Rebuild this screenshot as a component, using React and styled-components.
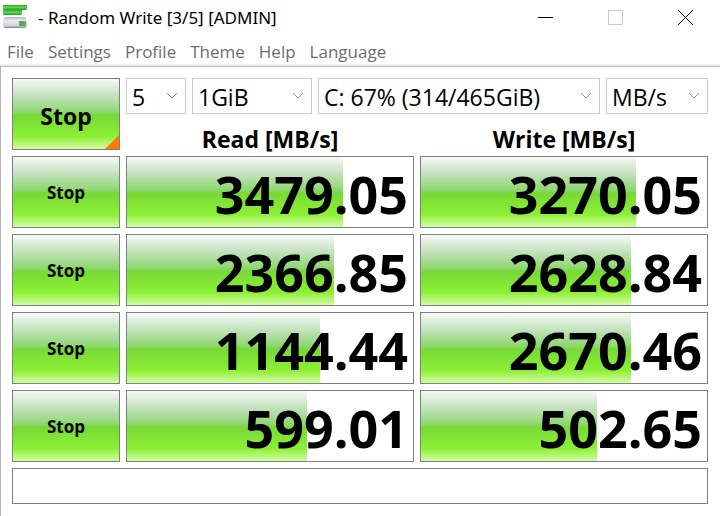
import React from "react";
import styled, { createGlobalStyle } from "styled-components";

const menus = ["File", "Settings", "Profile", "Theme", "Help", "Language"];

const results = [
  { read: "3479.05", readBar: 75.5, write: "3270.05", writeBar: 75 },
  { read: "2366.85", readBar: 72.5, write: "2628.84", writeBar: 73.5 },
  { read: "1144.44", readBar: 67.5, write: "2670.46", writeBar: 73.5 },
  { read: "599.01", readBar: 63, write: "502.65", writeBar: 61.5 },
];

function DiskIcon() {
  return (
    <svg width="26" height="26" viewBox="0 0 26 26" aria-hidden="true">
      <defs>
        <linearGradient id="diskTop" x1="0" y1="0" x2="0" y2="1">
          <stop offset="0" stopColor="#36a833" />
          <stop offset="0.5" stopColor="#5ed653" />
          <stop offset="1" stopColor="#1f9a1f" />
        </linearGradient>
        <linearGradient id="diskBody" x1="0" y1="0" x2="0" y2="1">
          <stop offset="0" stopColor="#b4b4b8" />
          <stop offset="0.3" stopColor="#e9e9f1" />
          <stop offset="0.8" stopColor="#d4d4de" />
          <stop offset="1" stopColor="#77777c" />
        </linearGradient>
      </defs>
      <path d="M1 0h24v4l-1 1H2L1 4z" fill="url(#diskTop)" />
      <path d="M1 5h19v4l-1 1H2L1 9z" fill="url(#diskTop)" />
      <path d="M3 12h20l2 3v6l-2 2H3l-2-2v-6z" fill="url(#diskBody)" />
      <rect x="17" y="16" width="7" height="5" fill="#8b958c" />
      <rect x="18" y="16" width="4" height="5" fill="#4fae48" />
    </svg>
  );
}

function Dropdown({ label, value }) {
  return (
    <SelectBox>
      <Select aria-label={label} defaultValue={value}>
        <option value={value}>{value}</option>
      </Select>
      <Chevron viewBox="0 0 12 7" aria-hidden="true">
        <path d="M1 1l5 5 5-5" fill="none" stroke="#999" />
      </Chevron>
    </SelectBox>
  );
}

function Result({ value, bar }) {
  return (
    <Meter>
      <Fill style={{ width: `${bar}%` }} />
      <Value>{value}</Value>
    </Meter>
  );
}

function App() {
  return (
    <>
      <GlobalStyle />
      <TitleBar>
        <DiskIcon />
        <Title>- Random Write [3/5] [ADMIN]</Title>
        <WindowButton aria-label="Minimize">
          <svg width="15" height="16">
            <path d="M0 7.5h15" stroke="#000" />
          </svg>
        </WindowButton>
        <WindowButton aria-label="Maximize" disabled>
          <svg width="15" height="16">
            <rect x="0.5" y="0.5" width="14" height="14" fill="none" stroke="#ccc" />
          </svg>
        </WindowButton>
        <WindowButton aria-label="Close">
          <svg width="15" height="16">
            <path d="M0 0l15 15M15 0L0 15" stroke="#000" />
          </svg>
        </WindowButton>
      </TitleBar>
      <MenuBar>
        {menus.map((name) => (
          <MenuItem key={name}>{name}</MenuItem>
        ))}
      </MenuBar>
      <Main>
        <Row>
          <StopButton $all>Stop</StopButton>
          <Setup>
            <Selects>
              <Dropdown label="Test count" value="5" />
              <Dropdown label="Test size" value="1GiB" />
              <Dropdown label="Drive" value="C: 67% (314/465GiB)" />
              <Dropdown label="Unit" value="MB/s" />
            </Selects>
            <Headings>
              <Heading>Read [MB/s]</Heading>
              <Heading>Write [MB/s]</Heading>
            </Headings>
          </Setup>
        </Row>
        {results.map((r) => (
          <Row key={r.read}>
            <StopButton>Stop</StopButton>
            <Result value={r.read} bar={r.readBar} />
            <Result value={r.write} bar={r.writeBar} />
          </Row>
        ))}
        <Comment aria-label="Comment" />
      </Main>
    </>
  );
}

const green = `linear-gradient(
  #f8f8f8 0%,
  #c3e2bd 24%,
  #8ed770 47%,
  #78d936 52%,
  #8cf035 82%,
  #d3fba6 100%
)`;

const GlobalStyle = createGlobalStyle`
  * {
    box-sizing: border-box;
  }
  body {
    margin: 0;
    background: #fff;
    color: #000;
  }
  body, button, select, input {
    font-family: "Open Sans", "Noto Sans", sans-serif;
  }
  svg {
    display: block;
  }
`;

const TitleBar = styled.header`
  display: flex;
  align-items: center;
  height: 36px;
  padding-left: 2px;
`;

const Title = styled.h1`
  flex: 1;
  margin: 0 0 0 10px;
  font-family: "Noto Sans", sans-serif;
  font-size: 17px;
  font-weight: 400;
  line-height: 24px;
  white-space: nowrap;
`;

const WindowButton = styled.button`
  display: flex;
  align-items: center;
  justify-content: center;
  width: 70px;
  height: 36px;
  padding: 0;
  border: 0;
  background: none;
`;

const MenuBar = styled.nav`
  display: flex;
  gap: 14px;
  height: 30px;
  padding-left: 7px;
  border-bottom: 2px solid #f0f0f0;
`;

const MenuItem = styled.button`
  padding: 4px 0 0;
  border: 0;
  background: none;
  color: #6d6d6d;
  font-size: 17px;
  line-height: 24px;
`;

const Main = styled.main`
  display: flex;
  flex-direction: column;
  gap: 6px;
  min-height: calc(100vh - 66px);
  padding: 11px 12px 12px 11px;
  border-top: 1px solid #b4b4b4;
  border-left: 1px solid #b4b4b4;
`;

const Row = styled.div`
  display: grid;
  grid-template-columns: 108px 1fr 1fr;
  grid-template-rows: 72px;
  gap: 6px;
`;

const StopButton = styled.button`
  position: relative;
  padding: ${(p) => (p.$all ? "4px 0 0" : "0")};
  border: 1px solid #808080;
  background: ${green};
  color: #000;
  font-size: ${(p) => (p.$all ? "23px" : "17px")};
  font-weight: 700;

  &::after {
    content: "";
    display: ${(p) => (p.$all ? "block" : "none")};
    position: absolute;
    right: 0;
    bottom: 0;
    border-bottom: 14px solid #ff7800;
    border-left: 14px solid transparent;
  }
`;

const Setup = styled.div`
  grid-column: 2 / 4;
`;

const Selects = styled.div`
  display: grid;
  grid-template-columns: 60px 120px 1fr 102px;
  gap: 6px;
`;

const SelectBox = styled.div`
  position: relative;
`;

const Select = styled.select`
  display: block;
  appearance: none;
  width: 100%;
  height: 36px;
  padding: 2px 0 0 5px;
  border: 1px solid #ccc;
  border-radius: 0;
  background: #fff;
  color: #000;
  font-size: 23px;
`;

const Chevron = styled.svg`
  position: absolute;
  top: 14px;
  right: 8px;
  width: 12px;
  height: 7px;
  pointer-events: none;
`;

const Headings = styled.div`
  display: grid;
  grid-template-columns: 1fr 1fr;
  gap: 6px;
  padding-top: 10px;
`;

const Heading = styled.h2`
  margin: 0;
  font-size: 23px;
  line-height: 30px;
  text-align: center;
`;

const Meter = styled.div`
  display: grid;
  border: 1px solid #808080;
`;

const Fill = styled.div`
  grid-area: 1 / 1;
  background: ${green};
`;

const Value = styled.div`
  grid-area: 1 / 1;
  padding: 4px 5px 0 0;
  font-size: 52px;
  font-weight: 700;
  line-height: 66px;
  text-align: right;
`;

const Comment = styled.input`
  width: 100%;
  height: 36px;
  padding: 0 6px;
  border: 1px solid #808080;
  background: #fff;
  font-size: 23px;
`;

export default App;
